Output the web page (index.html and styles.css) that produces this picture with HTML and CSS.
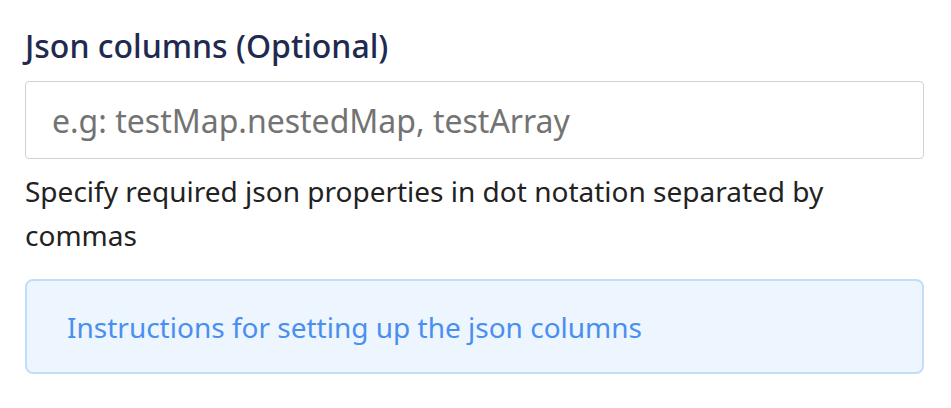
FILE: index.html
```html
<!DOCTYPE html>
<html lang="en">
<head>
<meta charset="utf-8">
<title>Json columns</title>
<link rel="stylesheet" href="styles.css">
</head>
<body>
<div class="field">
  <label class="field-label" for="json-cols">Json columns (Optional)</label>
  <input class="field-input" id="json-cols" type="text" placeholder="e.g: testMap.nestedMap, testArray">
  <p class="field-help">Specify required json properties in dot notation separated by commas</p>
  <div class="info-box">
    <a class="info-link" href="#">Instructions for setting up the json columns</a>
  </div>
</div>
</body>
</html>
```

FILE: styles.css
```css
html, body {
  margin: 0;
  padding: 0;
  background: #ffffff;
}

body {
  font-family: "Noto Sans", "Open Sans", sans-serif;
}

.field {
  width: 899px;
  padding: 22px 0 0 25px;
  display: flex;
  flex-direction: column;
}

.field-label {
  font-size: 32px;
  font-weight: 500;
  line-height: 48px;
  color: #1e2a4f;
  margin-bottom: 11px;
}

.field-input {
  box-sizing: border-box;
  width: 899px;
  height: 78px;
  margin: 0;
  padding: 0 26px;
  border: 1.5px solid #cfd3d9;
  border-radius: 4px;
  font-family: "Noto Sans", "Open Sans", sans-serif;
  font-size: 32px;
  color: #222;
  background: #fff;
  outline: none;
}

.field-input::placeholder {
  color: #737373;
}

.field-help {
  margin: 10px 0 0 0;
  font-size: 28px;
  line-height: 44px;
  color: #222222;
}

.info-box {
  box-sizing: border-box;
  margin-top: 22px;
  height: 95px;
  padding: 0 40px;
  border: 2px solid #c3dcfa;
  border-radius: 8px;
  background: #edf5fe;
  display: flex;
  align-items: center;
}

.info-link {
  font-size: 28px;
  color: #4a8ff0;
  text-decoration: none;
}
```
